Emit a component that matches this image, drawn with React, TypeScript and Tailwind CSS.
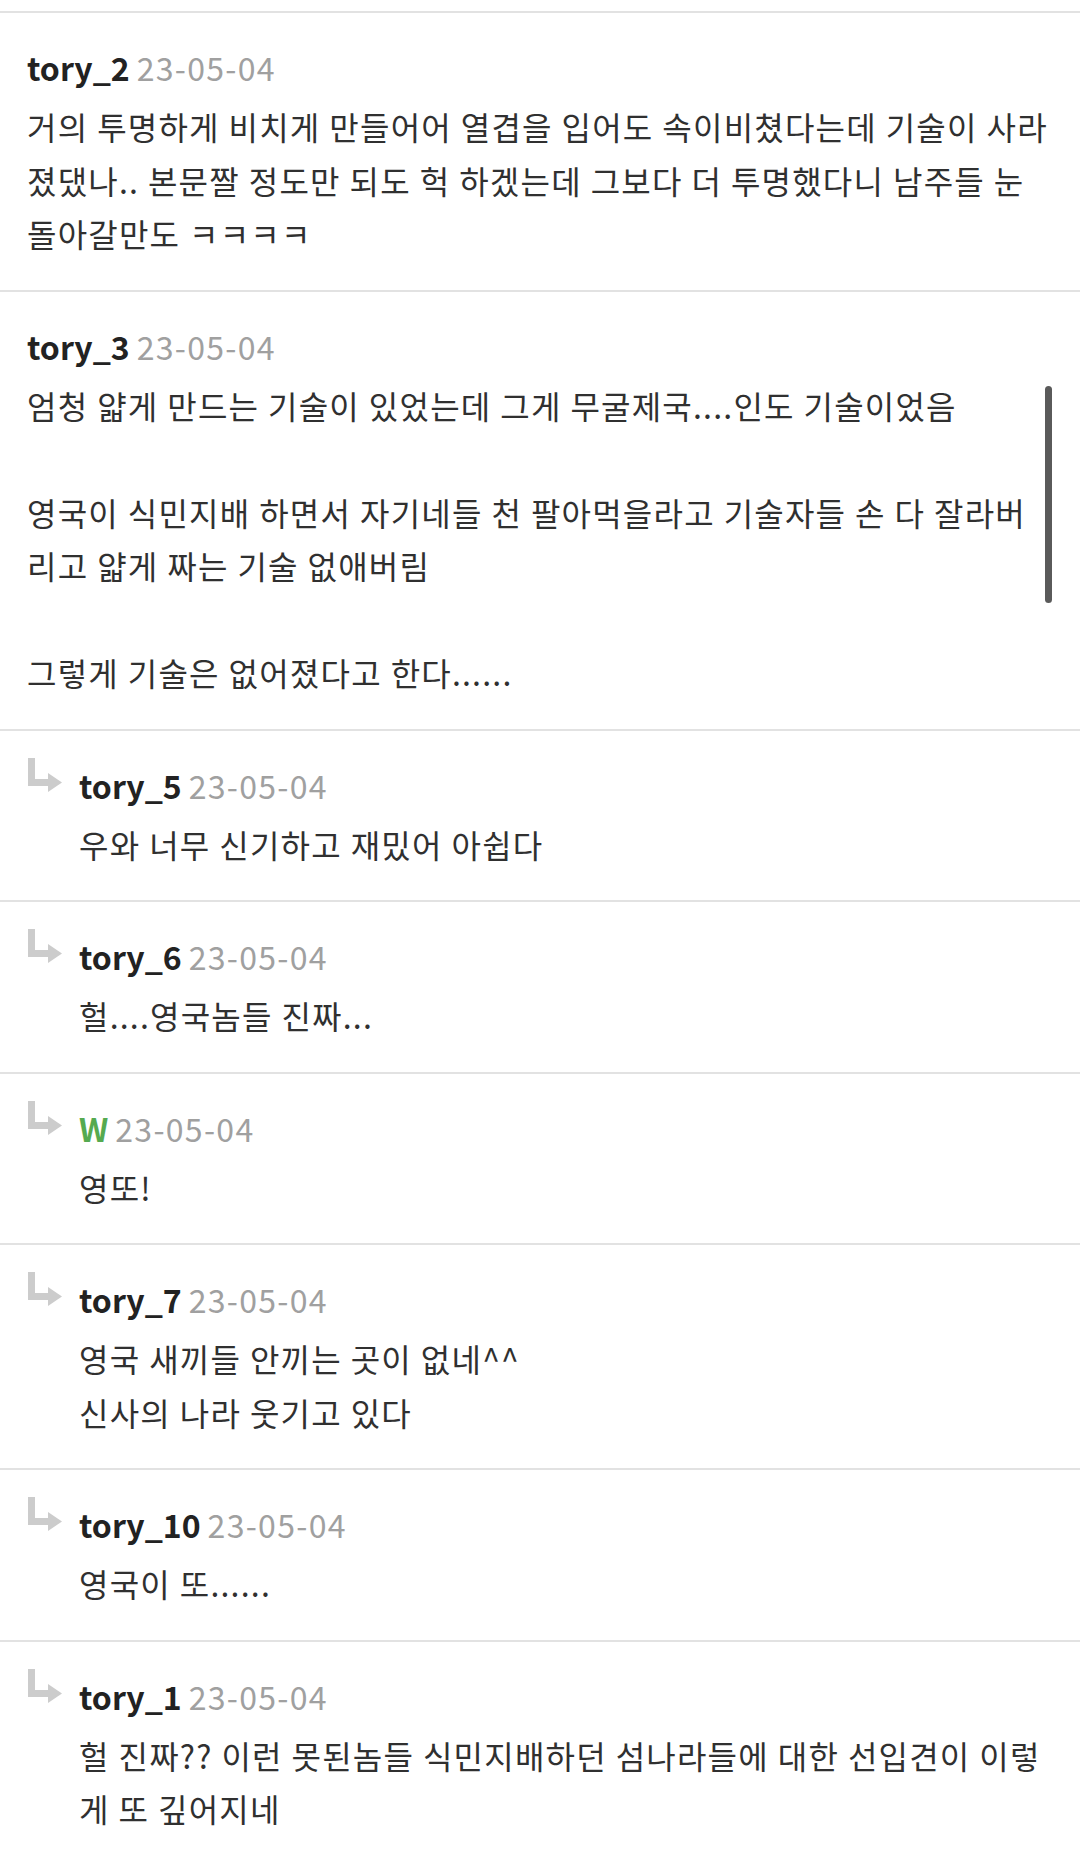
import React from 'react';

type Comment = {
  name: string;
  date: string;
  lines: string[];
  reply?: boolean;
  writer?: boolean;
};

// lines are kept as they wrap on the phone screen
const comments: Comment[] = [
  {
    name: 'tory_2',
    date: '23-05-04',
    lines: [
      '거의 투명하게 비치게 만들어어 열겹을 입어도 속이비쳤다는데 기술이 사라',
      '졌댔나.. 본문짤 정도만 되도 헉 하겠는데 그보다 더 투명했다니 남주들 눈',
      '돌아갈만도 ㅋㅋㅋㅋ',
    ],
  },
  {
    name: 'tory_3',
    date: '23-05-04',
    lines: [
      '엄청 얇게 만드는 기술이 있었는데 그게 무굴제국....인도 기술이었음',
      '',
      '영국이 식민지배 하면서 자기네들 천 팔아먹을라고 기술자들 손 다 잘라버',
      '리고 얇게 짜는 기술 없애버림',
      '',
      '그렇게 기술은 없어졌다고 한다......',
    ],
  },
  { name: 'tory_5', date: '23-05-04', lines: ['우와 너무 신기하고 재밌어 아쉽다'], reply: true },
  { name: 'tory_6', date: '23-05-04', lines: ['헐....영국놈들 진짜...'], reply: true },
  { name: 'W', date: '23-05-04', lines: ['영또!'], reply: true, writer: true },
  { name: 'tory_7', date: '23-05-04', lines: ['영국 새끼들 안끼는 곳이 없네^^', '신사의 나라 웃기고 있다'], reply: true },
  { name: 'tory_10', date: '23-05-04', lines: ['영국이 또......'], reply: true },
  {
    name: 'tory_1',
    date: '23-05-04',
    lines: ['헐 진짜?? 이런 못된놈들 식민지배하던 섬나라들에 대한 선입견이 이렇', '게 또 깊어지네'],
    reply: true,
  },
];

function ReplyArrow() {
  return (
    <svg width="36" height="38" viewBox="0 0 36 38" className="mt-[26px] shrink-0">
      <path d="M1 1h7v21h15v7H1z" fill="#cccccc" />
      <path d="M21 16l14 9.5L21 35z" fill="#cccccc" />
    </svg>
  );
}

function CommentItem({ c }: { c: Comment }) {
  return (
    <div className="flex border-b-2 border-[#e2e2e2] px-[27px]">
      {c.reply && (
        <div className="w-[52px] shrink-0">
          <ReplyArrow />
        </div>
      )}
      <div className="min-w-0 flex-1 pt-[34px] pb-[29px]">
        <div className="flex h-[40px] items-baseline gap-[7px] text-[32px] leading-[40px]">
          <span className={`font-bold ${c.writer ? 'text-[#55aa50]' : 'text-[#222222]'}`}>{c.name}</span>
          <span className="tracking-[1.3px] text-[#a0a0a0]">{c.date}</span>
        </div>
        <div className="mt-[13px] text-[32px] leading-[53.5px] tracking-[1.2px] [word-spacing:0.5px] text-[#303030]">
          {c.lines.map((l, i) => (
            <p key={i} className="h-[53.5px] whitespace-nowrap">
              {l}
            </p>
          ))}
        </div>
      </div>
    </div>
  );
}

export default function App() {
  return (
    <div
      className="relative h-[1860px] w-[1080px] overflow-hidden bg-white pt-[11px]"
      style={{ fontFamily: '"Noto Sans CJK KR", "Noto Sans", sans-serif' }}
    >
      <div className="border-t-2 border-[#e2e2e2]">
        {comments.map((c, i) => (
          <CommentItem key={i} c={c} />
        ))}
      </div>
      <div className="absolute left-[1045px] top-[386px] h-[217px] w-[7px] rounded-full bg-[#5a5a5a]" />
    </div>
  );
}
